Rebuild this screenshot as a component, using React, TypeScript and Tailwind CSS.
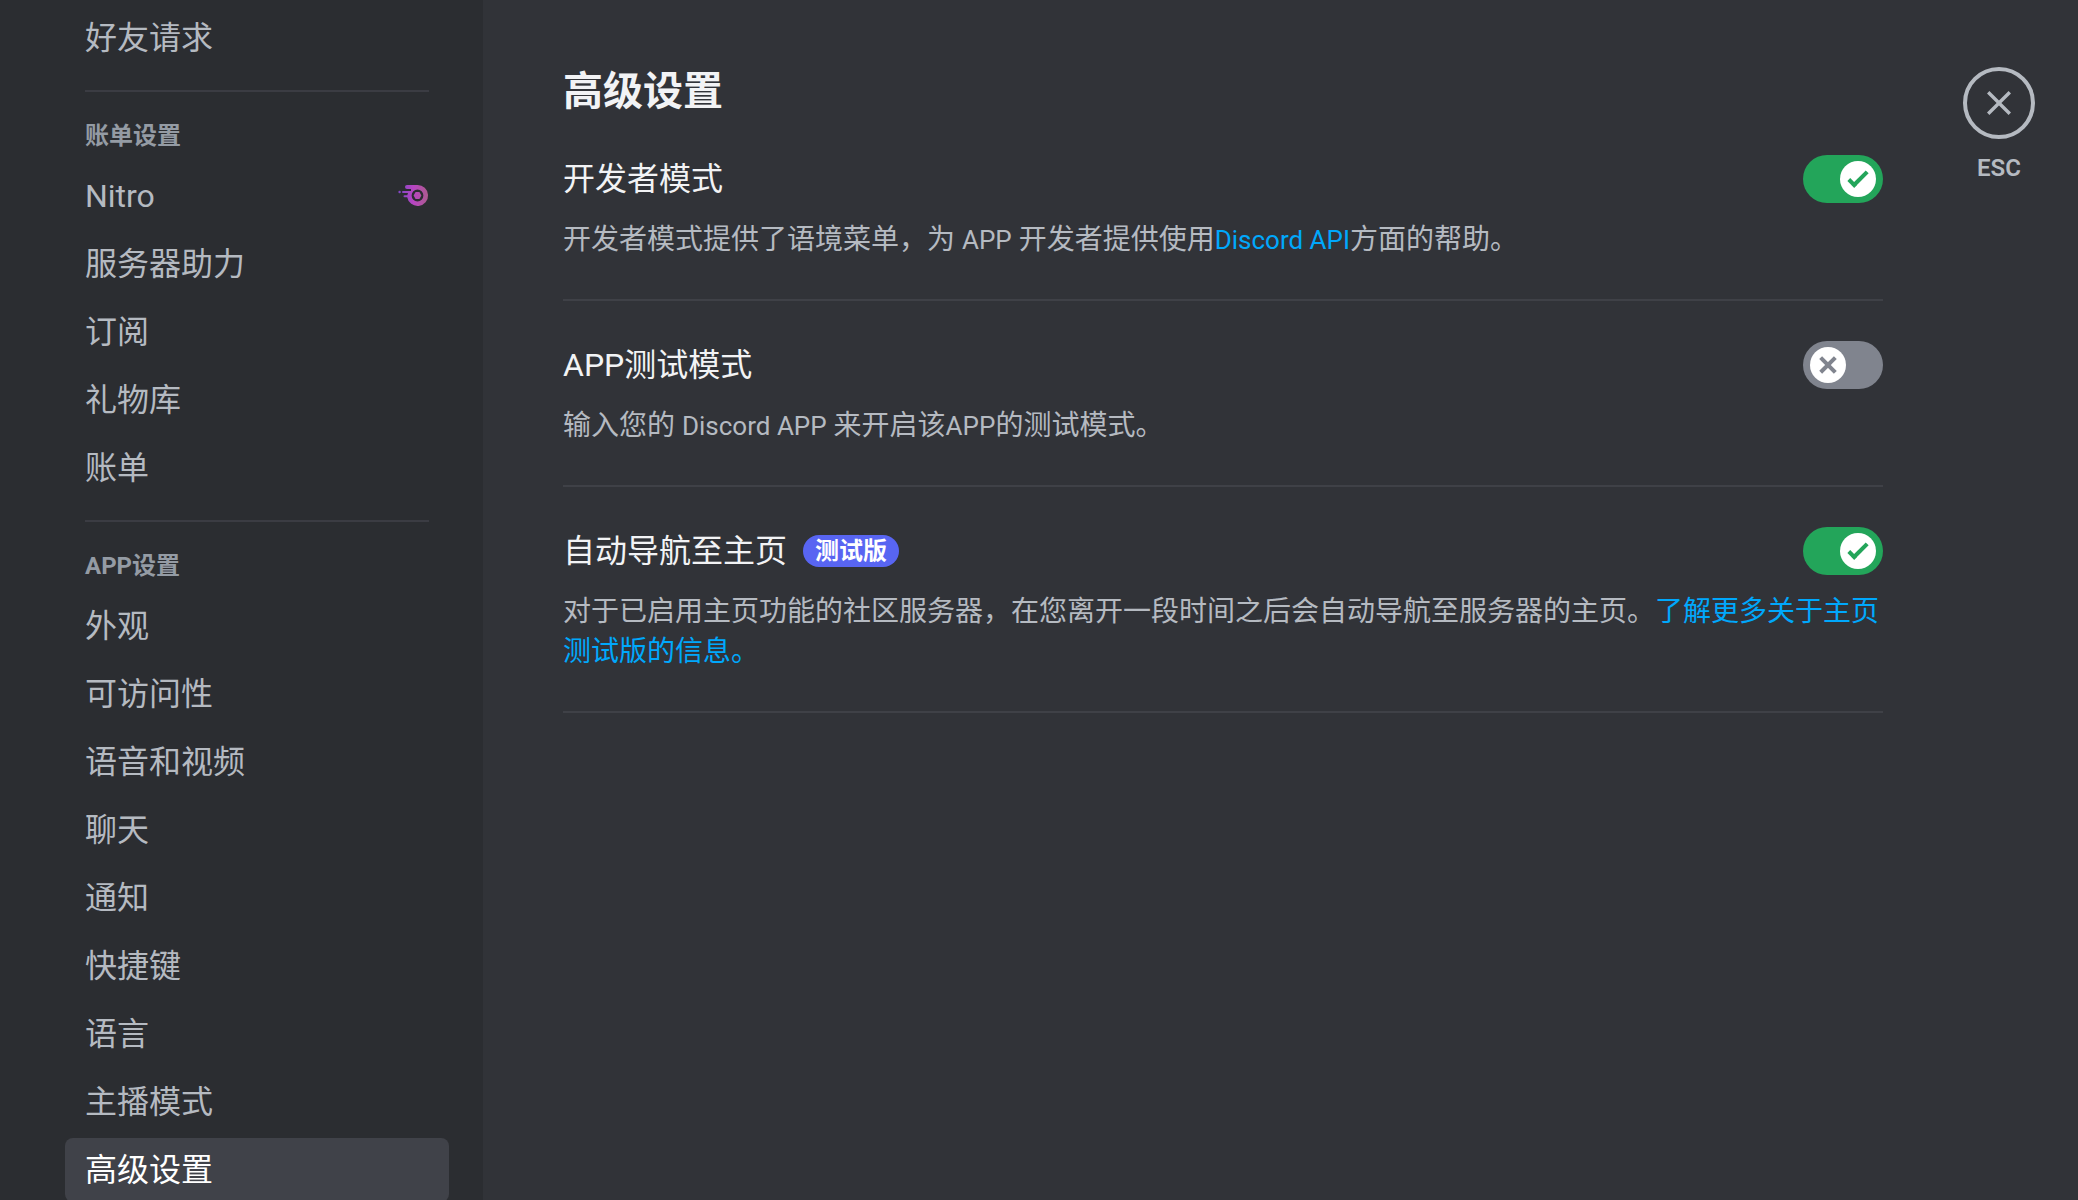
import { useState } from 'react';
import type { ReactNode } from 'react';

const billingItems = ['服务器助力', '订阅', '礼物库', '账单'];
const appItems = ['外观', '可访问性', '语音和视频', '聊天', '通知', '快捷键', '语言', '主播模式', '高级设置'];

const NitroIcon = () => (
  <svg className="h-6 w-8 shrink-0" viewBox="0 0 32 24" fill="none">
    <defs>
      <linearGradient id="nitro" x1="4" y1="12" x2="32" y2="12" gradientUnits="userSpaceOnUse">
        <stop stopColor="#8547c6" />
        <stop offset="0.45" stopColor="#b845c1" />
        <stop offset="1" stopColor="#ab5d8a" />
      </linearGradient>
    </defs>
    <g fill="url(#nitro)">
      <path
        fillRule="evenodd"
        d="M10 1H20.5A10.5 10.5 0 1 1 10.2 13.2H7.5A1 1 0 0 1 7.5 11.2H10.3L11 9H6A1 1 0 0 1 6 7H14V5H10A2 2 0 0 1 10 1ZM20.5 5.6A5.9 5.9 0 1 0 20.5 17.4A5.9 5.9 0 0 0 20.5 5.6Z"
      />
      <path d="M18.6 7.9H22.4L24.4 11.5L22.4 15.1H18.6L16.6 11.5Z" />
      <circle cx="2.6" cy="8" r="1.2" />
    </g>
  </svg>
);

const NavItem = ({ label, active, icon }: { label: string; active?: boolean; icon?: ReactNode }) => (
  <button
    type="button"
    className={`flex h-16 w-full items-center justify-between rounded-lg px-5 text-left text-[32px] leading-10 ${
      active ? 'bg-[#404249] text-white' : 'text-[#b5bac1]'
    }`}
  >
    {label}
    {icon}
  </button>
);

const NavHeader = ({ children }: { children: ReactNode }) => (
  <h2 className="mt-7 mb-3 px-5 text-2xl font-bold text-[#949ba4]">{children}</h2>
);

const Divider = () => <hr className="mx-5 mt-4 border-t-2 border-[#3b3c43]" />;

const Sidebar = () => (
  <nav className="w-[483px] shrink-0 bg-[#2b2d31] pt-1.5 pr-[34px] pl-[65px]">
    <NavItem label="好友请求" />
    <div className="pt-1">
      <Divider />
      <NavHeader>账单设置</NavHeader>
      <div className="flex flex-col gap-1">
        <NavItem label="Nitro" icon={<NitroIcon />} />
        {billingItems.map((item) => (
          <NavItem key={item} label={item} />
        ))}
      </div>
    </div>
    <div className="pt-1">
      <Divider />
      <NavHeader>APP设置</NavHeader>
      <div className="flex flex-col gap-1">
        {appItems.map((item) => (
          <NavItem key={item} label={item} active={item === '高级设置'} />
        ))}
      </div>
    </div>
  </nav>
);

const Toggle = ({ id, defaultOn }: { id: string; defaultOn: boolean }) => {
  const [on, setOn] = useState(defaultOn);

  return (
    <label
      htmlFor={id}
      className={`flex h-12 w-20 shrink-0 cursor-pointer items-center rounded-full px-[7px] ${
        on ? 'justify-end bg-[#23a55a]' : 'justify-start bg-[#80848e]'
      }`}
    >
      <input
        id={id}
        type="checkbox"
        role="switch"
        aria-labelledby={`${id}-title`}
        className="sr-only"
        checked={on}
        onChange={() => setOn(!on)}
      />
      <svg
        className={`h-9 w-9 rounded-full bg-white ${on ? 'text-[#23a55a]' : 'text-[#80848e]'}`}
        viewBox="0 0 20 20"
        fill="currentColor"
      >
        {on ? (
          <>
            <path d="M7.9 14.85L6.3 13.26L14.31 5.26L15.9 6.85L7.9 14.85Z" />
            <path d="M4.09 11.09L5.68 9.5L9.45 13.27L7.86 14.86L4.09 11.09Z" />
          </>
        ) : (
          <>
            <path d="M5.13 6.73L6.72 5.14L14.86 13.27L13.26 14.86L5.13 6.73Z" />
            <path d="M13.27 5.13L14.86 6.72L6.73 14.86L5.14 13.26L13.27 5.13Z" />
          </>
        )}
      </svg>
    </label>
  );
};

type SettingProps = {
  id: string;
  title: string;
  badge?: string;
  defaultOn: boolean;
  children: ReactNode;
};

const Setting = ({ id, title, badge, defaultOn, children }: SettingProps) => (
  <section className="mb-10 border-b-2 border-[#3f4147] pb-[39px]">
    <div className="flex items-center justify-between">
      <div className="flex items-center gap-4">
        <h3 id={`${id}-title`} className="text-[32px] leading-12 text-[#f2f3f5]">
          {title}
        </h3>
        {badge && (
          <span className="rounded-full bg-[#5865f2] px-3 text-2xl leading-8 font-bold text-white">{badge}</span>
        )}
      </div>
      <Toggle id={id} defaultOn={defaultOn} />
    </div>
    <p className="mt-[17px] text-[28px] leading-10 text-[#b5bac1]">{children}</p>
  </section>
);

// Latin words sit a little smaller than the Chinese text around them
const Latin = ({ children }: { children: ReactNode }) => <span className="text-[26px]">{children}</span>;

const App = () => {
  return (
    <div className="flex h-screen overflow-hidden bg-[#313338] font-['Roboto','Noto_Sans_CJK_SC',sans-serif]" lang="zh-CN">
      <Sidebar />
      <main className="flex flex-1 items-start gap-20 pt-[67px] pr-[43px] pl-20">
        <div className="flex-1">
          <h1 className="mb-[38px] text-[40px] leading-[50px] font-bold text-[#f2f3f5]">高级设置</h1>
          <Setting id="developer-mode" title="开发者模式" defaultOn>
            开发者模式提供了语境菜单，为 <Latin>APP</Latin> 开发者提供使用
            <a href="#api" className="text-[26px] text-[#00a8fc]">
              Discord API
            </a>
            方面的帮助。
          </Setting>
          <Setting id="app-test-mode" title="APP测试模式" defaultOn={false}>
            输入您的 <Latin>Discord APP</Latin> 来开启该<Latin>APP</Latin>的测试模式。
          </Setting>
          <Setting id="auto-home" title="自动导航至主页" badge="测试版" defaultOn>
            对于已启用主页功能的社区服务器，在您离开一段时间之后会自动导航至服务器的主页。
            <a href="#home-beta" className="text-[#00a8fc]">
              了解更多关于主页测试版的信息。
            </a>
          </Setting>
        </div>

        {/* Close button */}
        <button type="button" className="flex w-[72px] flex-col items-center text-[#b5bac1]">
          <span className="flex h-[72px] w-[72px] items-center justify-center rounded-full border-4 border-current">
            <svg className="h-9 w-9" viewBox="0 0 24 24" fill="currentColor">
              <path d="M18.4 4L12 10.4L5.6 4L4 5.6L10.4 12L4 18.4L5.6 20L12 13.6L18.4 20L20 18.4L13.6 12L20 5.6L18.4 4Z" />
            </svg>
          </span>
          <span className="mt-[13px] text-2xl font-semibold">ESC</span>
        </button>
      </main>
    </div>
  );
};

export default App;
